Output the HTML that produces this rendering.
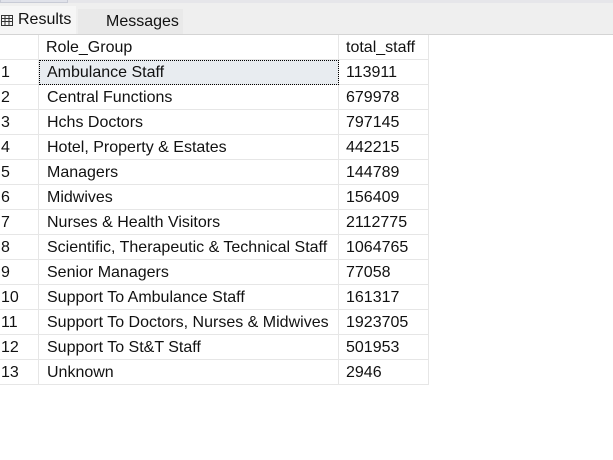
<!DOCTYPE html>
<html><head><style>
body{margin:0;width:613px;height:460px;background:#fff;font-family:"Liberation Sans",Arial,sans-serif;position:relative;overflow:hidden;color:#111}
.top{position:absolute;left:0;top:0;width:613px;height:34px;background:#efefef;border-bottom:1px solid #d4d4d4}
.strip{position:absolute;left:0;top:0;width:613px;height:3px;background:#e6e6ea}
.strip2{position:absolute;left:0;top:0;width:66px;height:2px;border:1px solid #c8cbd6;border-top:none;background:#e0e2ea}
.t1{position:absolute;left:0;top:6px;width:76px;height:28px;background:#f6f6f6;font-size:16px;line-height:28px}
.t2{position:absolute;left:78px;top:9px;width:105px;height:25px;background:#e9e9e9;font-size:16px;line-height:25px}
table{position:absolute;left:0;top:35px;border-collapse:collapse;font-size:16px}
td{height:23px;padding:1px 0 0 0;border:1px solid #e6e6e6;white-space:nowrap;line-height:23px;box-sizing:content-box}
td.n{width:37px;padding-left:1px;border-left:none}
td.r{width:291px;padding-left:8px}
td.v{width:82px;padding-left:7px}
tr.h td{border-top:none}
.sel{background:#e8ecf0;outline:1px dotted #000;outline-offset:-1px}
</style></head><body>
<div class="top"></div><div class="strip"></div><div class="strip2"></div>
<div class="t1"><svg width="12" height="11" style="position:absolute;left:1px;top:9px" viewBox="0 0 12 11"><rect x="0.5" y="0.5" width="11" height="10" fill="none" stroke="#333"/><path d="M0 3.5H12M0 6.5H12M4 0V11M8 0V11" stroke="#333"/></svg><span style="position:absolute;left:18px">Results</span></div>
<div class="t2"><span style="position:absolute;left:28px">Messages</span></div>
<table>
<tr class="h"><td class="n"></td><td class="r" style="padding-left:7px">Role_Group</td><td class="v">total_staff</td></tr>
<tr><td class="n">1</td><td class="r sel">Ambulance Staff</td><td class="v">113911</td></tr>
<tr><td class="n">2</td><td class="r">Central Functions</td><td class="v">679978</td></tr>
<tr><td class="n">3</td><td class="r">Hchs Doctors</td><td class="v">797145</td></tr>
<tr><td class="n">4</td><td class="r">Hotel, Property &amp; Estates</td><td class="v">442215</td></tr>
<tr><td class="n">5</td><td class="r">Managers</td><td class="v">144789</td></tr>
<tr><td class="n">6</td><td class="r">Midwives</td><td class="v">156409</td></tr>
<tr><td class="n">7</td><td class="r">Nurses &amp; Health Visitors</td><td class="v">2112775</td></tr>
<tr><td class="n">8</td><td class="r">Scientific, Therapeutic &amp; Technical Staff</td><td class="v">1064765</td></tr>
<tr><td class="n">9</td><td class="r">Senior Managers</td><td class="v">77058</td></tr>
<tr><td class="n">10</td><td class="r">Support To Ambulance Staff</td><td class="v">161317</td></tr>
<tr><td class="n">11</td><td class="r">Support To Doctors, Nurses &amp; Midwives</td><td class="v">1923705</td></tr>
<tr><td class="n">12</td><td class="r">Support To St&amp;T Staff</td><td class="v">501953</td></tr>
<tr><td class="n">13</td><td class="r">Unknown</td><td class="v">2946</td></tr>
</table>
</body></html>
